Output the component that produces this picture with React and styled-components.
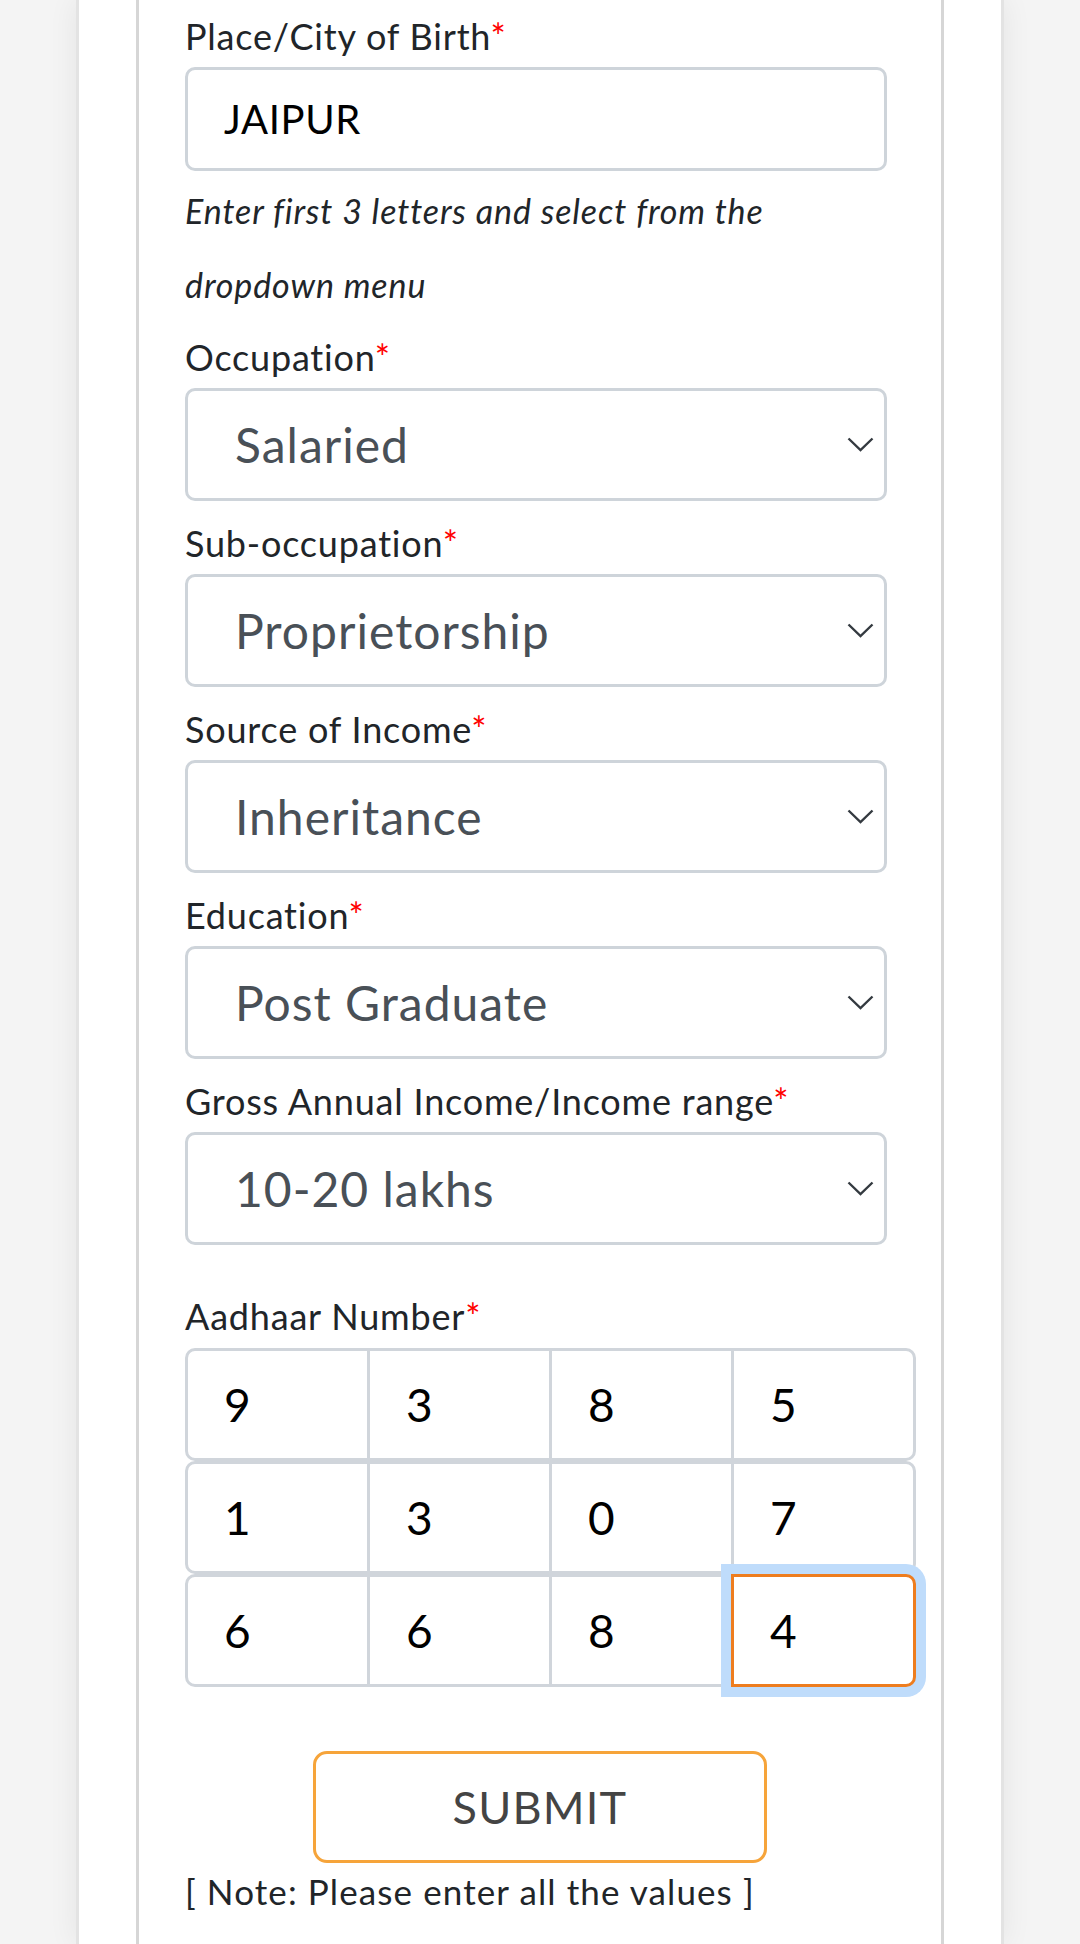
import React from "react";
import styled, { createGlobalStyle } from "styled-components";

const GlobalStyle = createGlobalStyle`
  html, body { margin: 0; padding: 0; }
  body {
    background: #f4f4f4;
    font-family: Lato, "Open Sans", Arial, sans-serif;
    color: #212529;
  }
  * { box-sizing: border-box; }
`;

const Page = styled.div`
  height: 1944px;
  overflow: hidden;
  display: flex;
  justify-content: center;
`;

const Card = styled.div`
  width: 928px;
  height: 100%;
  background: #fff;
  border-left: 3px solid #e3e3e3;
  border-right: 3px solid #e3e3e3;
  box-shadow: 0 0 28px rgba(0, 0, 0, 0.07);
  padding: 0 57px;
`;

const Inner = styled.div`
  height: 100%;
  border-left: 3px solid #d6d6d6;
  border-right: 3px solid #d6d6d6;
  padding: 15px 0 0 46px;
`;

const Field = styled.div`
  margin-bottom: ${(p) => p.$mb ?? 21}px;
`;

const Label = styled.div`
  font-size: 36px;
  line-height: 42px;
  letter-spacing: 0.8px;
  color: #212529;
  margin-bottom: ${(p) => p.$mb ?? 10}px;
`;

const Star = styled.span`
  color: #ff0000;
`;

const TextInput = styled.div`
  width: 702px;
  height: 104px;
  border: 3px solid #ced4da;
  border-radius: 10px;
  display: flex;
  align-items: center;
  padding-left: 36px;
  font-size: 40px;
  letter-spacing: 0.6px;
  color: #000;
`;

const Hint = styled.div`
  width: 650px;
  margin: 3px 0 14px;
  font-size: 34px;
  line-height: 74px;
  letter-spacing: 0.9px;
  font-style: italic;
  color: #212529;
`;

const SelectBox = styled.div`
  width: 702px;
  height: 113px;
  border: 3px solid #ced4da;
  border-radius: 10px;
  display: flex;
  align-items: center;
  justify-content: space-between;
  padding: 0 10px 0 47px;
  font-size: 48px;
  letter-spacing: 1px;
  color: #495057;
`;

const Chevron = () => (
  <svg width="27" height="15" viewBox="0 0 27 15" fill="none">
    <path d="M1.5 1.5 L13.5 13 L25.5 1.5" stroke="#343a40" strokeWidth="2.4" />
  </svg>
);

const Grid = styled.div`
  width: 731px;
  display: flex;
  flex-direction: column;
`;

const Row = styled.div`
  display: flex;
  height: 113px;
`;

const Cell = styled.div`
  flex: 1;
  position: relative;
  border: 3px solid ${(p) => (p.$focus ? "#ee7d1f" : "#d0d5db")};
  margin-left: -3px;
  display: flex;
  align-items: center;
  padding-left: 36px;
  font-size: 46px;
  color: #000;
  background: #fff;
  &:first-child {
    margin-left: 0;
    border-radius: 10px 0 0 10px;
  }
  &:last-child {
    border-radius: 0 10px 10px 0;
  }
  ${(p) =>
    p.$focus &&
    `
    z-index: 2;
    box-shadow: 0 0 0 10px #bfdcfb;
  `}
`;

const SubmitButton = styled.button`
  display: block;
  margin: 64px 0 7px 128px;
  width: 454px;
  height: 112px;
  border: 3px solid #f6a43a;
  border-radius: 14px;
  background: #fff;
  font-family: Lato, "Open Sans", Arial, sans-serif;
  font-size: 45px;
  letter-spacing: 1.2px;
  color: #444;
  padding: 0;
`;

const Note = styled.div`
  font-size: 35px;
  line-height: 42px;
  letter-spacing: 1.1px;
  color: #212529;
`;

const selects = [
  ["Occupation", "Salaried"],
  ["Sub-occupation", "Proprietorship"],
  ["Source of Income", "Inheritance"],
  ["Education", "Post Graduate"],
  ["Gross Annual Income/Income range", "10-20 lakhs"],
];

const aadhaar = [
  ["9", "3", "8", "5"],
  ["1", "3", "0", "7"],
  ["6", "6", "8", "4"],
];

export default function App() {
  return (
    <>
      <GlobalStyle />
      <Page>
        <Card>
          <Inner>
            <Field $mb={0}>
              <Label>
                Place/City of Birth<Star>*</Star>
              </Label>
              <TextInput>JAIPUR</TextInput>
            </Field>
            <Hint>Enter first 3 letters and select from the dropdown menu</Hint>
            {selects.map(([label, value], i) => (
              <Field key={label} $mb={i === selects.length - 1 ? 50 : 21}>
                <Label>
                  {label}
                  <Star>*</Star>
                </Label>
                <SelectBox>
                  <span>{value}</span>
                  <Chevron />
                </SelectBox>
              </Field>
            ))}
            <Label $mb={11}>
              Aadhaar Number<Star>*</Star>
            </Label>
            <Grid>
              {aadhaar.map((row, r) => (
                <Row key={r}>
                  {row.map((d, c) => (
                    <Cell key={c} $focus={r === 2 && c === 3}>
                      {d}
                    </Cell>
                  ))}
                </Row>
              ))}
            </Grid>
            <SubmitButton>SUBMIT</SubmitButton>
            <Note>[ Note: Please enter all the values ]</Note>
          </Inner>
        </Card>
      </Page>
    </>
  );
}
